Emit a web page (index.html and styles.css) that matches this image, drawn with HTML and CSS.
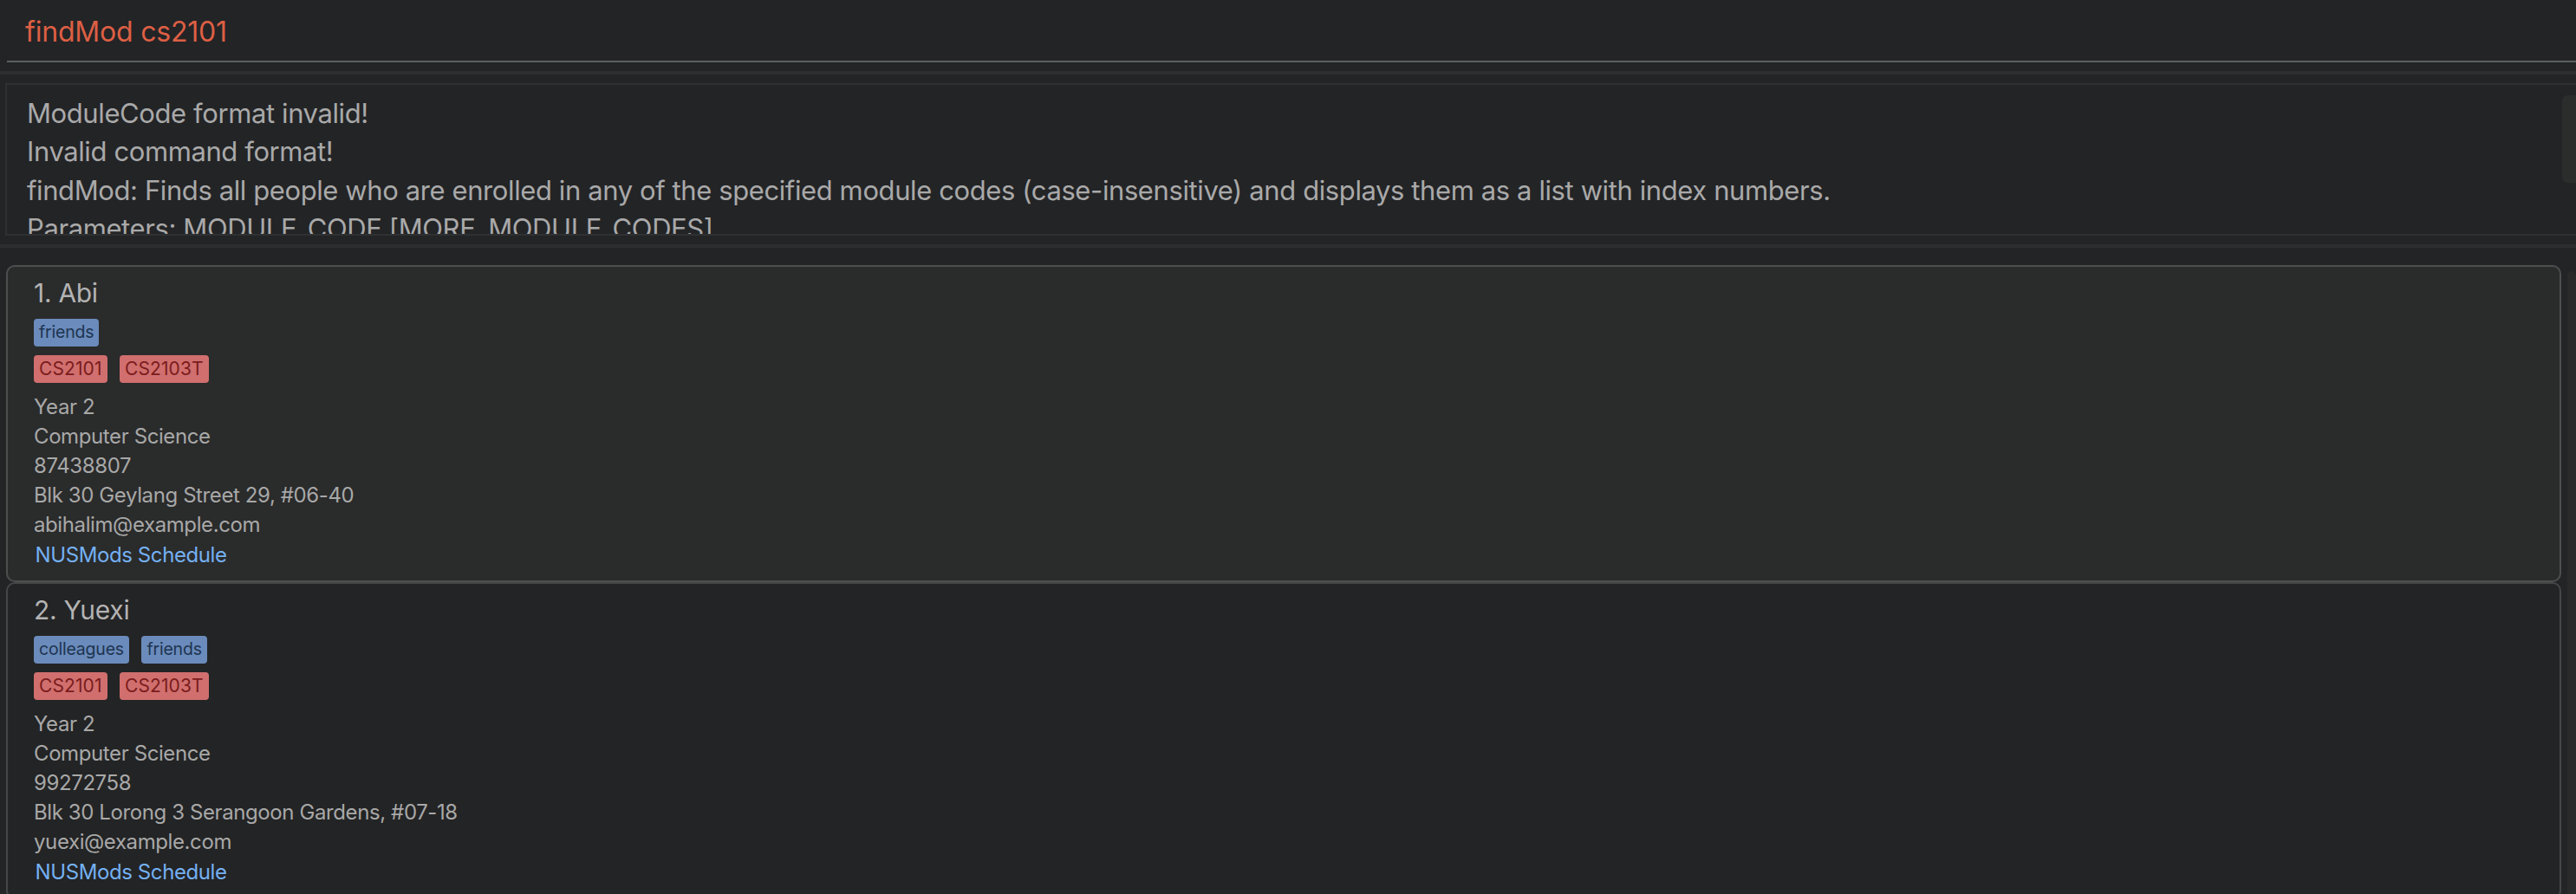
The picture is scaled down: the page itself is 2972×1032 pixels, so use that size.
FILE: index.html
```html
<!DOCTYPE html>
<html lang="en">
<head>
<meta charset="utf-8">
<title>findMod</title>
<link rel="stylesheet" href="styles.css">
</head>
<body>
<div class="app">
  <div class="command-box">
    <div class="command-input">findMod cs2101</div>
  </div>
  <div class="divider"></div>
  <div class="result-box">
    <div class="result-text">
      <div class="result-line">ModuleCode format invalid!</div>
      <div class="result-line">Invalid command format!</div>
      <div class="result-line">findMod: Finds all people who are enrolled in any of the specified module codes (case-insensitive) and displays them as a list with index numbers.</div>
      <div class="result-line">Parameters: MODULE_CODE [MORE_MODULE_CODES]...</div>
    </div>
    <div class="result-scroll"><div class="result-thumb"></div></div>
  </div>
  <div class="divider"></div>
  <div class="list">
    <div class="cards">
      <div class="card card-selected">
        <div class="name">1. Abi</div>
        <div class="tags">
          <span class="tag tag-blue">friends</span>
        </div>
        <div class="tags">
          <span class="tag tag-red">CS2101</span>
          <span class="tag tag-red">CS2103T</span>
        </div>
        <div class="details">
          <div class="detail">Year 2</div>
          <div class="detail">Computer Science</div>
          <div class="detail">87438807</div>
          <div class="detail">Blk 30 Geylang Street 29, #06-40</div>
          <div class="detail">abihalim@example.com</div>
        </div>
        <a class="link">NUSMods Schedule</a>
      </div>
      <div class="card">
        <div class="name">2. Yuexi</div>
        <div class="tags">
          <span class="tag tag-blue">colleagues</span>
          <span class="tag tag-blue">friends</span>
        </div>
        <div class="tags">
          <span class="tag tag-red">CS2101</span>
          <span class="tag tag-red">CS2103T</span>
        </div>
        <div class="details">
          <div class="detail">Year 2</div>
          <div class="detail">Computer Science</div>
          <div class="detail">99272758</div>
          <div class="detail">Blk 30 Lorong 3 Serangoon Gardens, #07-18</div>
          <div class="detail">yuexi@example.com</div>
        </div>
        <a class="link">NUSMods Schedule</a>
      </div>
    </div>
    <div class="list-scroll"></div>
  </div>
</div>
</body>
</html>
```
FILE: styles.css
```css
* { box-sizing: border-box; }

html, body {
  margin: 0;
  padding: 0;
  background: #232426;
  height: 100%;
  overflow: hidden;
}

.app {
  font-family: Inter, "Noto Sans", sans-serif;
  color: #a7a7a7;
  height: 1032px;
  overflow: hidden;
}

.command-box {
  padding-left: 8px;
}

.command-input {
  height: 72px;
  padding: 16.7px 0 0 21px;
  border-bottom: 2px solid #59615f;
  font-size: 32px;
  line-height: 40px;
  letter-spacing: -0.2px;
  color: #dd5f44;
}

.divider {
  height: 4px;
  margin: 10px 0;
  background: #2d2e30;
}

.result-box {
  display: flex;
  margin-left: 6px;
  height: 176px;
  border: 2px solid #2f3032;
  border-right: none;
}

.result-text {
  flex: 1;
  overflow: hidden;
  padding: 11px 0 0 23px;
  font-size: 31px;
  line-height: 44.3px;
  letter-spacing: -0.4px;
  color: #a9a9a9;
  white-space: nowrap;
}

.result-scroll {
  width: 16px;
  padding-top: 12px;
}

.result-thumb {
  height: 101px;
  background: #2b2c2c;
  border-radius: 6px 0 0 6px;
}

.list {
  display: flex;
  padding-top: 10px;
}

.cards {
  flex: 1;
  margin-left: 6.5px;
  display: flex;
  flex-direction: column;
}

.card {
  border: 2px solid #444647;
  border-radius: 10px;
  background: #232425;
  padding: 12.4px 20px 12.4px 30.5px;
}

.card-selected {
  background: #2a2b2b;
  border-color: #4d4f4f;
}

.name {
  font-size: 30px;
  line-height: 36px;
  letter-spacing: -0.3px;
  color: #b3b3b3;
}

.tags {
  display: flex;
  gap: 14.5px;
  margin-top: 10.6px;
}

.name + .tags {
  margin-top: 12px;
}

.tag {
  display: inline-block;
  height: 31.5px;
  padding: 3px 6px;
  line-height: 25.5px;
  border-radius: 4px;
}

.tag-blue {
  font-size: 19.5px;
  letter-spacing: -0.2px;
  background: #6a8bbb;
  color: #1e3451;
}

.tag-red {
  font-size: 21px;
  letter-spacing: 0.1px;
  background: #d06f6e;
  color: #7b1c1c;
}

.details {
  margin-top: 10.6px;
}

.detail {
  font-size: 24px;
  line-height: 34px;
  letter-spacing: -0.4px;
  color: #a8a8a8;
}

.link {
  display: inline-block;
  margin-top: 1px;
  padding-left: 1.5px;
  font-size: 24px;
  line-height: 34px;
  letter-spacing: -0.4px;
  color: #74b0f2;
  cursor: pointer;
}

.list-scroll {
  width: 10px;
  margin-left: 7px;
  margin-top: 7px;
  background: #2a2a2b;
  border-radius: 5px 5px 0 0;
}
```
